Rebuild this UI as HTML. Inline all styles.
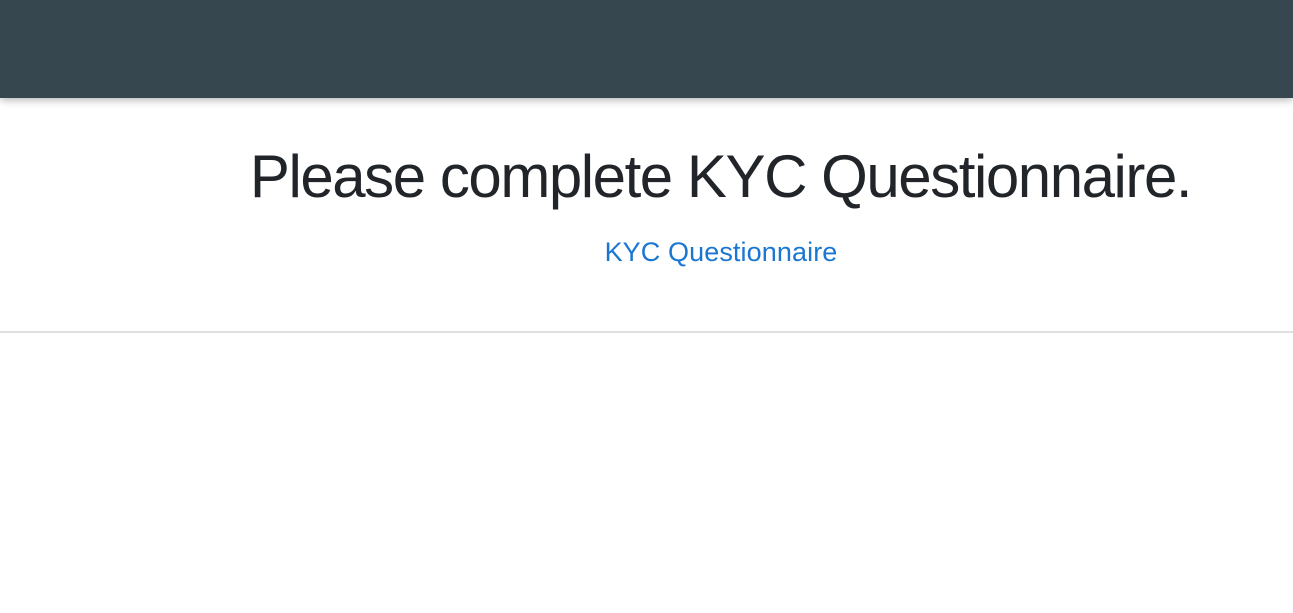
<!DOCTYPE html>
<html><head><style>
body{margin:0;width:1293px;height:613px;background:#fff;font-family:"Liberation Sans",sans-serif;overflow:hidden;position:relative}
.hdr{position:absolute;left:0;top:0;width:1293px;height:98px;background:#37474f;box-shadow:0 2px 8px rgba(0,0,0,.3)}
h1{position:absolute;left:150px;width:1141px;top:141px;margin:0;text-align:center;font-size:60px;font-weight:normal;color:#212529;line-height:72px;letter-spacing:-1.45px}
a{position:absolute;left:421px;width:600px;top:234px;text-align:center;font-size:27px;color:#1976d2;text-decoration:none;line-height:36px;letter-spacing:0.1px}
.ln{position:absolute;left:0;top:331px;width:1293px;height:2px;background:#e0e0e0}
</style></head><body>
<div class="hdr"></div>
<h1>Please complete KYC Questionnaire.</h1>
<a>KYC Questionnaire</a>
<div class="ln"></div>
</body></html>
